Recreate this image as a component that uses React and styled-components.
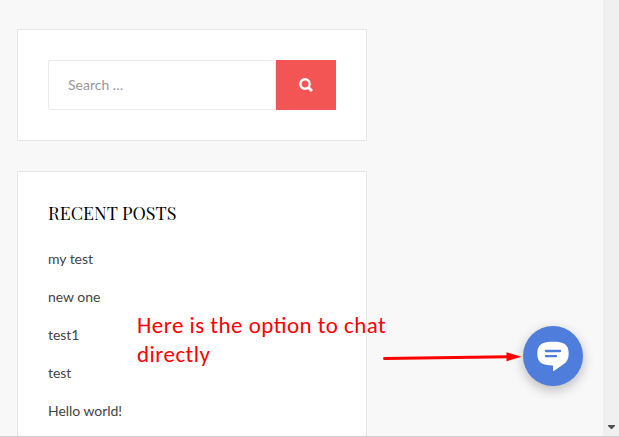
import React from "react";
import styled, { createGlobalStyle } from "styled-components";

const GlobalStyle = createGlobalStyle`
  *, *::before, *::after { box-sizing: border-box; }
  body { margin: 0; background: #f8f8f8; overflow: hidden; }
`;

const Page = styled.div`
  position: relative;
  display: flex;
  justify-content: space-between;
  width: 619px;
  height: 437px;
  overflow: hidden;
  background: #f8f8f8;
  border-bottom: 1px solid #cfcfcf;
  font-family: Lato, sans-serif;
`;

const Sidebar = styled.aside`
  display: flex;
  flex-direction: column;
  gap: 30px;
  width: 350px;
  margin: 29px 0 0 17px;
`;

const Widget = styled.section`
  flex-shrink: 0;
  padding: 30px;
  background: #fff;
  border: 1px solid #e7e7e7;
`;

const SearchForm = styled.form`
  display: flex;
  height: 50px;
`;

const SearchInput = styled.input`
  flex: 1;
  min-width: 0;
  padding: 0 20px 0 19px;
  border: 1px solid #ebebeb;
  border-radius: 2px;
  background: #fff;
  font: 14px/20px Lato, sans-serif;
  color: #444;
  outline: none;
  &::placeholder { color: #999; opacity: 1; }
`;

const SearchButton = styled.button`
  display: flex;
  align-items: center;
  justify-content: center;
  width: 60px;
  padding: 0;
  border: 0;
  background: #f35454;
`;

const Title = styled.h2`
  margin: 0;
  font: 400 18px/22px "Playfair Display", "Liberation Serif", serif;
  letter-spacing: 0;
  white-space: nowrap;
  color: #000;
`;

const PostList = styled.ul`
  margin: 16px 0 0;
  padding: 0;
  list-style: none;
`;

const Post = styled.li`
  height: 38px;
  font-size: 14px;
  line-height: 38px;
  letter-spacing: -0.04px;
  color: #444;
`;

const ScrollTrack = styled.div`
  display: flex;
  align-items: flex-end;
  justify-content: center;
  width: 16px;
  padding-bottom: 7px;
  background: #f0f0f0;
  svg { display: block; }
`;

const Note = styled.p`
  position: absolute;
  left: 137px;
  top: 311px;
  margin: 0;
  font-family: Carlito, Calibri, "Open Sans", sans-serif;
  font-size: 23px;
  line-height: 29px;
  font-feature-settings: "liga" 1;
  letter-spacing: 0.47px;
  white-space: nowrap;
  color: #f00;
`;

const Arrow = styled.svg`
  position: absolute;
  left: 380px;
  top: 345px;
`;

const ChatButton = styled.button`
  position: absolute;
  left: 523px;
  top: 326px;
  width: 60px;
  height: 60px;
  padding: 0;
  border: 0;
  border-radius: 50%;
  background: #4e7ddc;
  box-shadow: 0 4px 12px rgba(0, 0, 0, 0.25);
  svg { display: block; }
`;

const posts = ["my test", "new one", "test1", "test", "Hello world!"];

export default function App() {
  return (
    <Page>
      <GlobalStyle />
      <Sidebar>
        <Widget>
          <SearchForm>
            <SearchInput placeholder="Search …" />
            <SearchButton type="button" aria-label="Search">
              <svg width="14" height="14" viewBox="0 0 14 14" fill="none" stroke="#fff">
                <circle cx="6" cy="6" r="4.7" strokeWidth="2.4" />
                <path d="M9.3 9.3 L13 13" strokeWidth="3" />
              </svg>
            </SearchButton>
          </SearchForm>
        </Widget>
        <Widget>
          <Title>RECENT POSTS</Title>
          <PostList>
            {posts.map((p) => <Post key={p}>{p}</Post>)}
          </PostList>
        </Widget>
      </Sidebar>
      <ScrollTrack>
        <svg width="7" height="4" viewBox="0 0 7 4"><path d="M0 0H7V1L4 4H3L0 1Z" fill="#505050" /></svg>
      </ScrollTrack>
      <Note>Here is the option to chat<br />directly</Note>
      <Arrow width="144" height="24" viewBox="0 0 144 24">
        <path d="M4.5 13.5 L128 11.8" stroke="#f00" strokeWidth="3" strokeLinecap="round" />
        <path d="M126.5 7.2 L141.5 11.7 L126.5 16.2 Z" fill="#f00" />
      </Arrow>
      <ChatButton aria-label="Chat">
        <svg width="60" height="60" viewBox="0 0 60 60">
          <path d="M30 15.8C40.5 15.8 45.7 18.2 45.7 27.5C45.7 32.8 43.8 36.2 40.5 38.2L31.2 44.8Q30 45.4 30 44.4V39.4C19 39.4 14.3 36.8 14.3 27.5C14.3 18.2 19.5 15.8 30 15.8Z" fill="#fff" />
          <path d="M23 25H37M23 30.2H33" stroke="#4e7ddc" strokeWidth="2.3" strokeLinecap="round" />
        </svg>
      </ChatButton>
    </Page>
  );
}
